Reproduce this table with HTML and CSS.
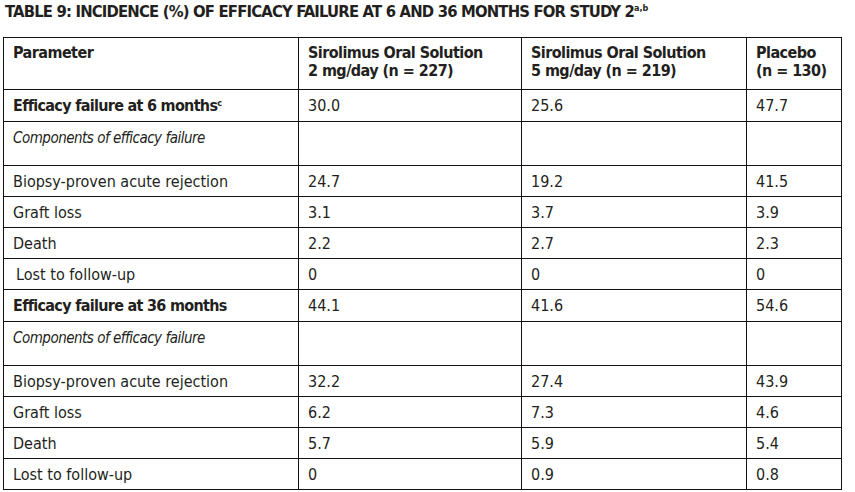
FILE: index.html
```html
<!DOCTYPE html>
<html>
<head>
<meta charset="utf-8">
<link rel="stylesheet" href="styles.css">
</head>
<body>
<div class="page">
  <h1 class="title">TABLE 9: INCIDENCE (%) OF EFFICACY FAILURE AT 6 AND 36 MONTHS FOR STUDY 2<sup>a,b</sup></h1>
  <table class="data">
    <colgroup>
      <col class="c1"><col class="c2"><col class="c3"><col class="c4">
    </colgroup>
    <thead>
      <tr class="head">
        <th>Parameter</th>
        <th>Sirolimus Oral Solution<br>2 mg/day (n = 227)</th>
        <th>Sirolimus Oral Solution<br>5 mg/day (n = 219)</th>
        <th>Placebo<br>(n = 130)</th>
      </tr>
    </thead>
    <tbody>
      <tr class="main"><td class="b">Efficacy failure at 6 months<sup>c</sup></td><td>30.0</td><td>25.6</td><td>47.7</td></tr>
      <tr class="comp"><td class="i">Components of efficacy failure</td><td></td><td></td><td></td></tr>
      <tr><td>Biopsy-proven acute rejection</td><td>24.7</td><td>19.2</td><td>41.5</td></tr>
      <tr><td>Graft loss</td><td>3.1</td><td>3.7</td><td>3.9</td></tr>
      <tr><td>Death</td><td>2.2</td><td>2.7</td><td>2.3</td></tr>
      <tr><td class="indent">Lost to follow-up</td><td>0</td><td>0</td><td>0</td></tr>
      <tr class="main"><td class="b">Efficacy failure at 36 months</td><td>44.1</td><td>41.6</td><td>54.6</td></tr>
      <tr class="comp"><td class="i">Components of efficacy failure</td><td></td><td></td><td></td></tr>
      <tr><td>Biopsy-proven acute rejection</td><td>32.2</td><td>27.4</td><td>43.9</td></tr>
      <tr><td>Graft loss</td><td>6.2</td><td>7.3</td><td>4.6</td></tr>
      <tr><td>Death</td><td>5.7</td><td>5.9</td><td>5.4</td></tr>
      <tr><td>Lost to follow-up</td><td>0</td><td>0.9</td><td>0.8</td></tr>
    </tbody>
  </table>
</div>
</body>
</html>
```

FILE: styles.css
```css
html, body {
  margin: 0;
  padding: 0;
  background: #ffffff;
}
.page {
  padding: 2px 0 0 3px;
  font-family: "DejaVu Sans Condensed", "Liberation Sans", sans-serif;
  color: #231f20;
}
.title {
  margin: 0 0 16px 2px;
  font-size: 16.5px;
  line-height: 19px;
  font-weight: bold;
  letter-spacing: -0.82px;
}
.title sup {
  font-size: 9px;
  letter-spacing: 0;
  vertical-align: 6px;
  line-height: 0;
}
.data {
  border-collapse: collapse;
  table-layout: fixed;
  width: 838px;
  font-size: 16px;
  line-height: 17px;
}
.c1 { width: 295px; }
.c2 { width: 223px; }
.c3 { width: 225px; }
.c4 { width: 95px; }
.data th, .data td {
  border: 1px solid #111111;
  text-align: left;
  vertical-align: top;
  padding: 7px 9px 0 9px;
  height: 31px;
  box-sizing: border-box;
}
.data th {
  font-weight: bold;
  letter-spacing: -0.55px;
  line-height: 18px;
  height: 52px;
  padding-top: 6px;
}
.data tr.main td { height: 32px; }
.data tr.comp td { height: 44px; padding-top: 8px; }
.data td.b { font-weight: bold; letter-spacing: -0.7px; }
.data td.i {
  font-style: italic;
  font-size: 15px;
  letter-spacing: -0.5px;
}
.data td.indent { padding-left: 12px; }
.data sup {
  font-size: 9px;
  letter-spacing: 0;
  vertical-align: 5px;
  line-height: 0;
}
```
